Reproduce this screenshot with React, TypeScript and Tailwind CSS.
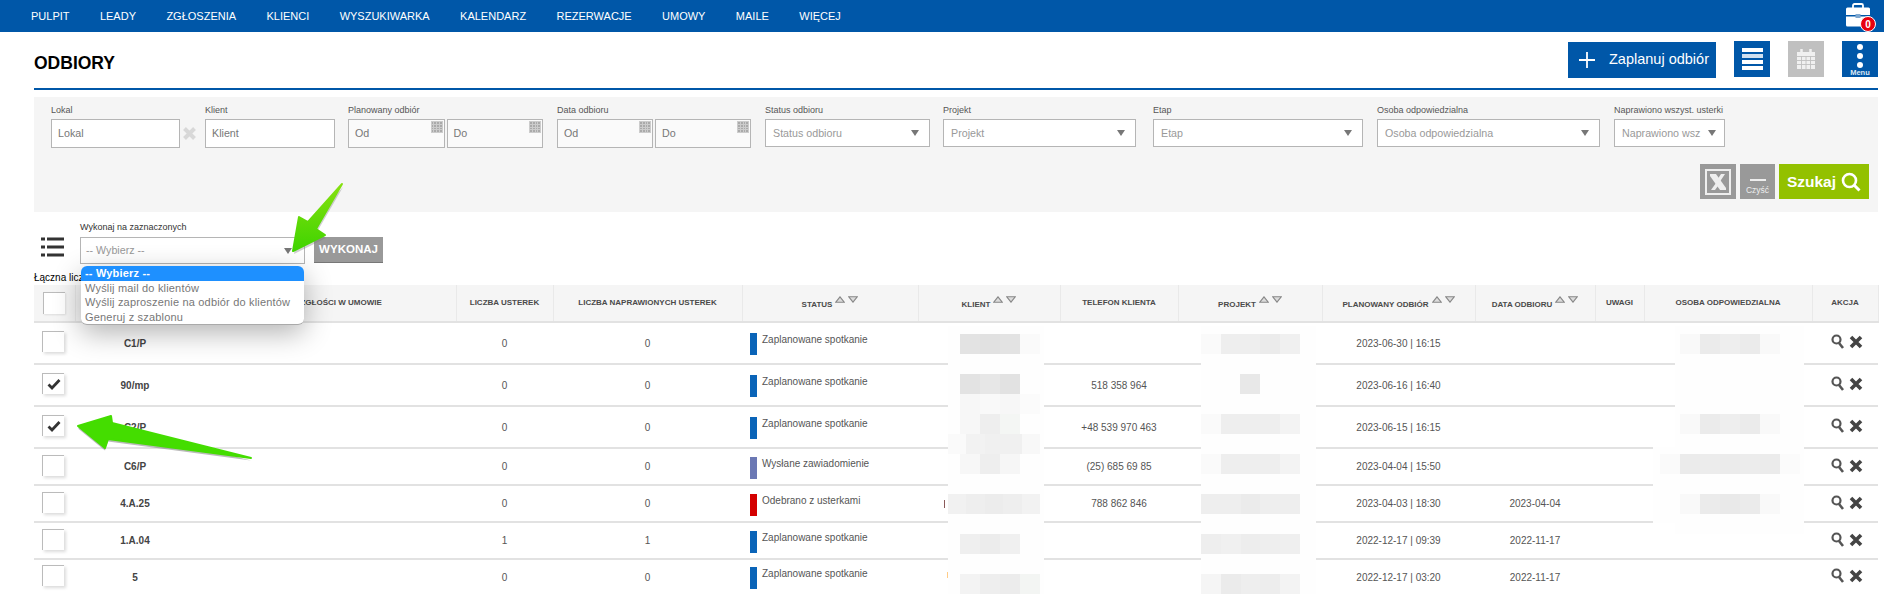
import React from "react";

const NAV = ["PULPIT", "LEADY", "ZGŁOSZENIA", "KLIENCI", "WYSZUKIWARKA", "KALENDARZ", "REZERWACJE", "UMOWY", "MAILE", "WIĘCEJ"];

const BLUE = "#0a64b8";
const PURPLE = "#6b78b4";
const RED = "#d40000";

const ROWS = [
  { h: "h-[42px]", pt: "pt-[8px]", lokal: "C1/P", u: "0", n: "0", bar: BLUE, status: "Zaplanowane spotkanie", tel: "", plan: "2023-06-30 | 16:15", data: "", checked: false },
  { h: "h-[42px]", pt: "pt-[8px]", lokal: "90/mp", u: "0", n: "0", bar: BLUE, status: "Zaplanowane spotkanie", tel: "518 358 964", plan: "2023-06-16 | 16:40", data: "", checked: true },
  { h: "h-[42px]", pt: "pt-[8px]", lokal: "C2/P", u: "0", n: "0", bar: BLUE, status: "Zaplanowane spotkanie", tel: "+48 539 970 463", plan: "2023-06-15 | 16:15", data: "", checked: true },
  { h: "h-[37px]", pt: "pt-[6px]", lokal: "C6/P", u: "0", n: "0", bar: PURPLE, status: "Wysłane zawiadomienie", tel: "(25) 685 69 85", plan: "2023-04-04 | 15:50", data: "", checked: false },
  { h: "h-[37px]", pt: "pt-[6px]", lokal: "4.A.25", u: "0", n: "0", bar: RED, status: "Odebrano z usterkami", tel: "788 862 846", plan: "2023-04-03 | 18:30", data: "2023-04-04", checked: false },
  { h: "h-[37px]", pt: "pt-[6px]", lokal: "1.A.04", u: "1", n: "1", bar: BLUE, status: "Zaplanowane spotkanie", tel: "", plan: "2022-12-17 | 09:39", data: "2022-11-17", checked: false },
  { h: "h-[37px]", pt: "pt-[5px]", lokal: "5", u: "0", n: "0", bar: BLUE, status: "Zaplanowane spotkanie", tel: "", plan: "2022-12-17 | 03:20", data: "2022-11-17", checked: false },
];

// pixelated patches that hide names in the screenshot
type Patch = { top: number; left: number; width: number; height: number; cells?: string[] };

const CLIENT: Patch[] = [
  { top: 326, left: 948, width: 96, height: 268 },
  { top: 500, left: 944, width: 1, height: 8, cells: ["#8a5a5a"] },
  { top: 572, left: 947, width: 1, height: 6, cells: ["#ffcc88"] },
  { top: 334, left: 960, width: 80, height: 20, cells: ["#e3e3e3", "#e1e1e1", "#e3e3e3", "#fafafa"] },
  { top: 374, left: 960, width: 60, height: 20, cells: ["#e3e3e3", "#e7e7e7", "#e2e2e2"] },
  { top: 394, left: 960, width: 80, height: 20, cells: ["#f7f7f7", "#f9f9f9", "#f7f7f7", "#fbfbfb"] },
  { top: 414, left: 960, width: 60, height: 20, cells: ["#f7f7f7", "#eeeeee", "#f4f6f4"] },
  { top: 434, left: 948, width: 92, height: 20, cells: ["#fafafa", "#f2f2f2", "#f0f0f0", "#f0f0f0", "#f8f8f8"] },
  { top: 454, left: 960, width: 60, height: 20, cells: ["#f7f7f7", "#eeeeee", "#f6f6f6"] },
  { top: 494, left: 948, width: 92, height: 20, cells: ["#f1f1f1", "#eeeeee", "#ececec", "#eeeeee", "#f2f2f2"] },
  { top: 534, left: 960, width: 60, height: 20, cells: ["#efefef", "#ececec", "#f0f0f0"] },
  { top: 574, left: 960, width: 80, height: 20, cells: ["#f3f3f3", "#eeeeee", "#ececec", "#f3f5f3"] },
];

const PROJECT: Patch[] = [
  { top: 326, left: 1201, width: 115, height: 268 },
  { top: 334, left: 1201, width: 99, height: 20, cells: ["#fafafa", "#eeeeee", "#eeeeee", "#ebebeb", "#f0f0f0"] },
  { top: 374, left: 1240, width: 20, height: 20, cells: ["#e8e8e8"] },
  { top: 414, left: 1201, width: 99, height: 20, cells: ["#fafafa", "#eeeeee", "#eeeeee", "#eeeeee", "#f3f3f3"] },
  { top: 454, left: 1201, width: 99, height: 20, cells: ["#fafafa", "#eeeeee", "#eeeeee", "#eeeeee", "#f3f3f3"] },
  { top: 494, left: 1201, width: 99, height: 20, cells: ["#eeeeee", "#eeeeee", "#ebebeb", "#eeeeee", "#eeeeee"] },
  { top: 534, left: 1201, width: 99, height: 20, cells: ["#eeeeee", "#f0f0f0", "#ededed", "#eeeeee", "#efefef"] },
  { top: 574, left: 1201, width: 99, height: 20, cells: ["#f5f5f5", "#ebebeb", "#eeeeee", "#ededed", "#f3f3f3"] },
];

const PERSON: Patch[] = [
  { top: 326, left: 1675, width: 129, height: 208 },
  { top: 447, left: 1653, width: 151, height: 76 },
  { top: 334, left: 1680, width: 100, height: 20, cells: ["#f9f9f9", "#ebebeb", "#eeeeee", "#ebebeb", "#f9f9f9"] },
  { top: 414, left: 1680, width: 100, height: 20, cells: ["#f9f9f9", "#ebebeb", "#eeeeee", "#ebebeb", "#f9f9f9"] },
  { top: 454, left: 1660, width: 140, height: 20, cells: ["#fafafa", "#ebebeb", "#ececec", "#ebebeb", "#ececec", "#ebebeb", "#fbfbfb"] },
  { top: 494, left: 1680, width: 100, height: 20, cells: ["#f9f9f9", "#ebebeb", "#e9e9e9", "#ebebeb", "#f9f9f9"] },
];

const Mosaic = ({ patches }: { patches: Patch[] }) => (
  <>
    {patches.map((p, i) => (
      <div
        key={i}
        className="absolute flex bg-[#fefefe]"
        style={{ top: p.top, left: p.left, width: p.width, height: p.height }}
      >
        {p.cells?.map((c, j) => (
          <div key={j} className="h-full flex-1" style={{ backgroundColor: c }} />
        ))}
      </div>
    ))}
  </>
);

const Caret = () => <div className="h-0 w-0 border-x-[4px] border-t-[6px] border-x-transparent border-t-[#777]" />;

const CalGrid = () => (
  <div className="absolute right-[1px] top-[1px] grid h-[12px] w-[12px] grid-cols-4 gap-[1px] bg-[#ccc] p-[1px]">
    {Array.from({ length: 16 }).map((_, i) => (
      <div key={i} className="bg-[#aaa]" />
    ))}
  </div>
);

const Field = ({ label, w, children, className = "" }: { label: string; w: string; children: React.ReactNode; className?: string }) => (
  <div className={`${w} ${className} shrink-0`}>
    <div className="mb-[3px] h-[11px] whitespace-nowrap text-[9px] leading-[11px] text-[#555]">{label}</div>
    {children}
  </div>
);

const TextInput = ({ text, date }: { text: string; date?: boolean }) => (
  <div className={`relative flex h-[29px] flex-1 items-center border border-[#b5b5b5] pl-[6px] text-[10.7px] text-[#777] ${date ? "bg-[#fafafa]" : "bg-white"}`}>
    {text}
    {date && <CalGrid />}
  </div>
);

const SelectBox = ({ text, pad = "pr-[10px]" }: { text: string; pad?: string }) => (
  <div className={`flex h-[28px] items-center justify-between whitespace-nowrap border border-[#b5b5b5] bg-white pl-[7px] text-[10.7px] text-[#999] ${pad}`}>
    <span>{text}</span>
    <Caret />
  </div>
);

const SortArrows = () => (
  <span className="ml-[3px] inline-flex -translate-y-[3px] gap-[3px] align-middle">
    <svg width="10" height="7" viewBox="0 0 10 7">
      <path d="M5 .8 9.2 6.2H.8Z" fill="#dcdcdc" stroke="#888" strokeWidth="1.1" />
    </svg>
    <svg width="10" height="7" viewBox="0 0 10 7">
      <path d="M5 6.2 9.2.8H.8Z" fill="#dcdcdc" stroke="#888" strokeWidth="1.1" />
    </svg>
  </span>
);

const Th = ({ w, children }: { w: string; children?: React.ReactNode }) => (
  <th className={`${w} border-b-2 border-r border-b-[#e2e2e2] border-r-[#e9e9e9] p-0 text-center align-middle text-[8px] font-bold uppercase text-[#4a4a4a]`}>
    {children}
  </th>
);

const SortTh = ({ w, label }: { w: string; label: string }) => (
  <Th w={w}>
    <span className="relative top-[2px]">{label}</span>
    <SortArrows />
  </Th>
);

const Checkbox = ({ checked }: { checked?: boolean }) => (
  <div className="flex h-[21px] w-[22px] items-center justify-center border-l border-t border-l-[#bbb] border-t-[#bbb] bg-white shadow-[2px_2px_3px_rgba(0,0,0,0.14)]">
    {checked && (
      <svg width="14" height="12" viewBox="0 0 14 12">
        <path d="M1.5 6.5 5 10 12.5 2" fill="none" stroke="#333" strokeWidth="2.8" />
      </svg>
    )}
  </div>
);

const App = () => {
  return (
    <div className="relative h-[594px] w-[1884px] overflow-hidden bg-white font-['Liberation_Sans',Arial,sans-serif] text-[10px] text-[#555]">
      {/* top nav */}
      <nav className="flex h-[32px] items-center justify-between bg-[#0057a8] pl-[31px] pr-[7px]">
        <div className="flex gap-[30.4px] text-[11px] text-white">
          {NAV.map((n) => (
            <span key={n}>{n}</span>
          ))}
        </div>
        <div className="relative top-[1px] h-[28px] w-[32px]">
          <svg width="26" height="24" viewBox="0 0 26 24" className="absolute left-0 top-0">
            <path d="M8 5V2.5A1.5 1.5 0 0 1 9.5 1h7A1.5 1.5 0 0 1 18 2.5V5" fill="none" stroke="#fff" strokeWidth="1.8" />
            <path d="M1 6a1.5 1.5 0 0 1 1.5-1.5h21A1.5 1.5 0 0 1 25 6v6H1Z" fill="#fff" />
            <path d="M1 13.5h24V22a1.5 1.5 0 0 1-1.5 1.5h-21A1.5 1.5 0 0 1 1 22Z" fill="#fff" />
            <rect x="10.5" y="11" width="5" height="4" fill="#7fa8d0" />
          </svg>
          <div className="absolute left-[15px] top-[13px] flex h-[16px] w-[16px] items-center justify-center rounded-full border border-white bg-[#e8000d] text-[10px] font-bold text-white">
            0
          </div>
        </div>
      </nav>

      <main className="pl-[34px] pr-[6px]">
        {/* title row */}
        <div className="flex h-[58px] border-b-2 border-[#0057a8]">
          <h1 className="mt-[22px] text-[17.5px] font-bold leading-[18px] text-black">ODBIORY</h1>
          <div className="ml-auto flex items-start pt-[9px] text-white">
            <div className="mt-[1px] flex h-[36px] w-[148px] items-center bg-[#0057a8] pl-[10px] text-[14.5px]">
              <svg width="18" height="18" viewBox="0 0 18 18" className="mr-[13px]">
                <path d="M9 1v16M1 9h16" stroke="#fff" strokeWidth="1.8" />
              </svg>
              Zaplanuj odbiór
            </div>
            <div className="ml-[18px] flex h-[36px] w-[36px] flex-col items-center justify-center gap-[2px] bg-[#0057a8]">
              <div className="h-[4px] w-[21px] bg-white" />
              <div className="h-[4px] w-[21px] bg-[#cfe0f0]" />
              <div className="h-[4px] w-[21px] bg-white" />
              <div className="h-[4px] w-[21px] bg-white" />
            </div>
            <div className="ml-[18px] flex h-[36px] w-[36px] items-center justify-center bg-[#c0c0c0]">
              <svg width="20" height="22" viewBox="0 0 20 22">
                <path d="M1 4h18v17H1z" fill="#f0f0f0" />
                <path d="M5.5 1v5M14.5 1v5" stroke="#f0f0f0" strokeWidth="2.5" />
                <path d="M1 8.5h18M1 12.5h18M1 16.5h18M5.5 8v13M10 8v13M14.5 8v13" stroke="#c0c0c0" strokeWidth=".9" />
              </svg>
            </div>
            <div className="ml-[18px] flex h-[36px] w-[36px] flex-col items-center bg-[#0057a8] pt-[3px]">
              <div className="h-[6px] w-[6px] rounded-full bg-white" />
              <div className="mt-[3px] h-[6px] w-[6px] rounded-full bg-white" />
              <div className="mt-[3px] h-[6px] w-[6px] rounded-full bg-white" />
              <div className="text-[7.5px] font-bold leading-[9px] text-[#dde8f4]">Menu</div>
            </div>
          </div>
        </div>

        {/* filters */}
        <section className="mt-[7px] h-[115px] bg-[#f5f5f5] pl-[17px] pr-[9px] pt-[8px]">
          <div className="flex items-start">
            <Field label="Lokal" w="w-[129px]">
              <div className="flex">
                <TextInput text="Lokal" />
              </div>
            </Field>
            <div className="mt-[18px] flex w-[25px] justify-center pr-[7px] pt-[3px]">
              <svg width="15" height="15" viewBox="0 0 15 15">
                <path d="M2.5 2.5 12.5 12.5M12.5 2.5 2.5 12.5" stroke="#d8d8d8" strokeWidth="4" />
              </svg>
            </div>
            <Field label="Klient" w="w-[130px]">
              <div className="flex">
                <TextInput text="Klient" />
              </div>
            </Field>
            <Field label="Planowany odbiór" w="w-[195px]" className="ml-[13px]">
              <div className="flex gap-[2px]">
                <TextInput text="Od" date />
                <TextInput text="Do" date />
              </div>
            </Field>
            <Field label="Data odbioru" w="w-[194px]" className="ml-[14px]">
              <div className="flex gap-[2px]">
                <TextInput text="Od" date />
                <TextInput text="Do" date />
              </div>
            </Field>
            <Field label="Status odbioru" w="w-[165px]" className="ml-[14px]">
              <SelectBox text="Status odbioru" />
            </Field>
            <Field label="Projekt" w="w-[193px]" className="ml-[13px]">
              <SelectBox text="Projekt" />
            </Field>
            <Field label="Etap" w="w-[210px]" className="ml-[17px]">
              <SelectBox text="Etap" />
            </Field>
            <Field label="Osoba odpowiedzialna" w="w-[223px]" className="ml-[14px]">
              <SelectBox text="Osoba odpowiedzialna" />
            </Field>
            <Field label="Naprawiono wszyst. usterki" w="w-[111px]" className="ml-[14px]">
              <SelectBox text="Naprawiono wsz" pad="pr-[8px]" />
            </Field>
          </div>
          <div className="mt-[16px] flex justify-end gap-[4px]">
            <div className="flex h-[35px] w-[36px] items-center justify-center bg-[#999]">
              <svg width="26" height="26" viewBox="0 0 26 26">
                <rect x="1" y="1" width="24" height="24" fill="none" stroke="#eee" strokeWidth="2" />
                <path d="M5 5h6l10 14v2h-6L5 7Z" fill="#eee" />
                <path d="M20 5h-4l-4 6 2 3ZM6 21h4l3-4-2-3Z" fill="#eee" />
              </svg>
            </div>
            <div className="flex h-[35px] w-[35px] flex-col items-center bg-[#999] pt-[15px]">
              <div className="h-[2px] w-[16px] bg-[#eee]" />
              <div className="mt-[4px] text-[8.5px] leading-[10px] text-[#eee]">Czyść</div>
            </div>
            <div className="flex h-[35px] w-[90px] items-center justify-center gap-[5px] bg-[#93c100] text-[15.5px] font-bold text-white">
              Szukaj
              <svg width="20" height="20" viewBox="0 0 20 20">
                <circle cx="8.5" cy="8.5" r="6.5" fill="none" stroke="#fff" strokeWidth="2.6" />
                <path d="M13 13l5.5 5.5" stroke="#fff" strokeWidth="3" />
              </svg>
            </div>
          </div>
        </section>

        {/* bulk action */}
        <div className="flex h-[59px] items-start pl-[7px] pt-[10px]">
          <svg width="23" height="20" viewBox="0 0 23 20" className="mt-[15px]">
            <path d="M0 2h4M6 2h17M0 10h4M6 10h17M0 18h4M6 18h17" stroke="#333" strokeWidth="3" />
          </svg>
          <div className="ml-[16px] w-[225px]">
            <div className="h-[15px] text-[9px] leading-[11px] text-[#333]">Wykonaj na zaznaczonych</div>
            <div className="flex h-[27px] items-center justify-between border border-[#b5b5b5] bg-white pl-[5px] pr-[12px] text-[10.7px] text-[#999]">
              -- Wybierz --
              <Caret />
            </div>
          </div>
          <div className="ml-[9px] mt-[15px] flex h-[26px] w-[69px] items-center justify-center border-b border-[#777] bg-[#999] text-[11.5px] font-bold text-white">
            WYKONAJ
          </div>
        </div>

        <div className="h-[14px] text-[10px] leading-[14px] text-black">Łączna liczba: 7</div>

        {/* table */}
        <table className="w-[1844px] table-fixed border-collapse">
          <thead>
            <tr className="h-[37px] bg-[#f5f5f5]">
              <Th w="w-[41px]">
                <div className="ml-[9px] h-[22px] w-[22px] border-l border-t border-l-[#bbb] border-t-[#bbb] bg-white shadow-[1px_1px_2px_rgba(0,0,0,0.1)]" />
              </Th>
              <Th w="w-[120px]">Lokal</Th>
              <Th w="w-[261px]">Liczba zgłości w umowie</Th>
              <Th w="w-[97px]">Liczba usterek</Th>
              <Th w="w-[189px]">Liczba naprawionych usterek</Th>
              <SortTh w="w-[176px]" label="Status" />
              <SortTh w="w-[142px]" label="Klient" />
              <Th w="w-[118px]">Telefon klienta</Th>
              <SortTh w="w-[144px]" label="Projekt" />
              <SortTh w="w-[153px]" label="Planowany odbiór" />
              <SortTh w="w-[120px]" label="Data odbioru" />
              <Th w="w-[49px]">Uwagi</Th>
              <Th w="w-[168px]">Osoba odpowiedzialna</Th>
              <Th w="w-[66px]">Akcja</Th>
            </tr>
          </thead>
          <tbody>
            {ROWS.map((r) => (
              <tr key={r.lokal + r.plan} className={`${r.h} border-b-2 border-[#e2e2e2] text-center text-[10px] text-[#555]`}>
                <td className={`p-0 pl-[8px] align-top ${r.pt}`}>
                  <Checkbox checked={r.checked} />
                </td>
                <td className="p-0 font-bold text-[#444]">{r.lokal}</td>
                <td className="p-0" />
                <td className="p-0">{r.u}</td>
                <td className="p-0">{r.n}</td>
                <td className={`p-0 pl-[8px] text-left align-top ${r.pt}`}>
                  <div className="mt-[2px] flex items-start">
                    <div className="h-[22px] w-[7px]" style={{ backgroundColor: r.bar }} />
                    <span className="ml-[5px] leading-[14px]">{r.status}</span>
                  </div>
                </td>
                <td className="p-0" />
                <td className="p-0">{r.tel}</td>
                <td className="p-0" />
                <td className="p-0">{r.plan}</td>
                <td className="p-0">{r.data}</td>
                <td className="p-0" />
                <td className="p-0" />
                <td className={`p-0 pl-[19px] align-top ${r.pt}`}>
                  <div className="mt-[3px] flex items-center gap-[5px]">
                    <svg width="13" height="15" viewBox="0 0 13 15">
                      <circle cx="5.5" cy="5.5" r="4" fill="none" stroke="#555" strokeWidth="2.2" />
                      <path d="M8 9l4 5" stroke="#555" strokeWidth="2.6" />
                    </svg>
                    <svg width="14" height="14" viewBox="0 0 14 14">
                      <path d="M2 2 12 12M12 2 2 12" stroke="#444" strokeWidth="3.6" />
                    </svg>
                  </div>
                </td>
              </tr>
            ))}
          </tbody>
        </table>
      </main>

      {/* redacted names */}
      <Mosaic patches={CLIENT} />
      <Mosaic patches={PROJECT} />
      <Mosaic patches={PERSON} />

      {/* open select list */}
      <div className="absolute left-[81px] top-[266px] w-[223px] overflow-hidden rounded-[6px] border-b border-[#aaa] bg-white text-[11px] leading-[14.5px] tracking-[0.18px] text-[#777] shadow-[0_8px_28px_rgba(0,0,0,0.3)]">
        <div className="bg-[#1e90ff] pl-[4px] font-bold text-white">-- Wybierz --</div>
        <div className="pl-[4px]">Wyślij mail do klientów</div>
        <div className="pl-[4px]">Wyślij zaproszenie na odbiór do klientów</div>
        <div className="pl-[4px]">Generuj z szablonu</div>
      </div>

      {/* green annotation arrows */}
      <svg width="1884" height="594" viewBox="0 0 1884 594" className="pointer-events-none absolute left-0 top-0">
        <defs>
          <linearGradient id="arrowA" x1="0" y1="0" x2="0" y2="1">
            <stop offset="0" stopColor="#86e010" />
            <stop offset="1" stopColor="#3fd400" />
          </linearGradient>
        </defs>
        <path d="M342 185 316 230 325 236 293 252 299 218 308 223Z" fill="#777" opacity=".35" transform="translate(1 2)" />
        <path d="M342 184 316 229 325 235 293 251 299 217 308 222Z" fill="url(#arrowA)" stroke="url(#arrowA)" strokeWidth="2" strokeLinejoin="round" />
        <path d="M251 459 108 440 105 449 78 427 111 417 112 424Z" fill="#666" opacity=".45" transform="translate(0 1.5)" />
        <path d="M251 458 108 439 105 448 78 426 111 416 112 423Z" fill="#44dd00" stroke="#44dd00" strokeWidth="2" strokeLinejoin="round" />
      </svg>
    </div>
  );
};

export default App;
